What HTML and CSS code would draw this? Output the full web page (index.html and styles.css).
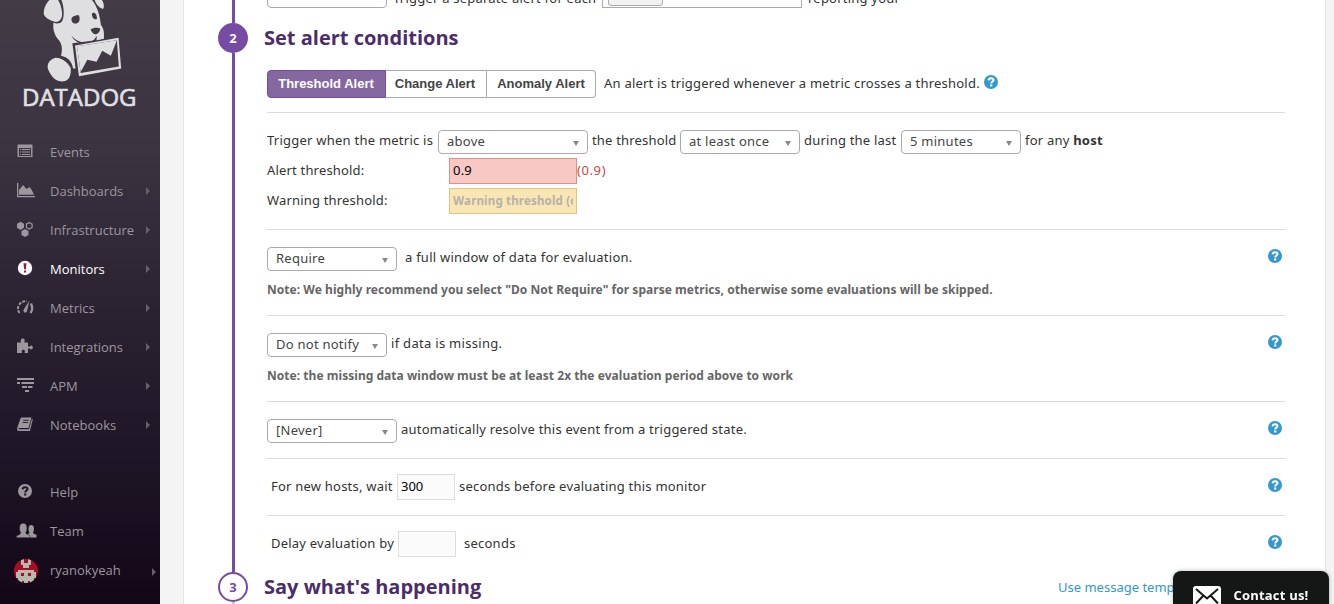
FILE: index.html
```html
<!DOCTYPE html>
<html lang="en">
<head>
<meta charset="utf-8">
<title>Monitors | Datadog</title>
<link rel="stylesheet" href="styles.css">
</head>
<body>
<svg class="sprite" width="0" height="0">
  <symbol id="help" viewBox="0 0 14 14">
    <circle cx="7" cy="7" r="7" fill="currentColor"/>
    <path class="mark" d="M4.600 5.400C4.700 3.900 5.700 3.200 7.100 3.200c1.500 0 2.400.8 2.400 1.900C9.500 6.600 7.200 6.600 7.200 8.600" fill="none" stroke-width="2"/>
    <rect class="dot" x="6.100" y="9.500" width="2.200" height="2"/>
  </symbol>
</svg>
<aside class="sidebar">
  <div class="brand">
    <svg class="dog" viewBox="0 0 480 250">
      <g fill="#dfdfe2">
        <path d="M148 0C136 12 130 28 131 43C135 54 150 62 166 66C178 67 187 57 186 40C185 22 180 10 174 0Z"/>
        <path d="M184 0C193 22 193 52 186 64C180 72 168 72 160 68C158 88 162 102 172 116C188 132 187 150 183 168C203 172 216 186 219 206L228 206L220 132L250 134L280 126L312 117C313 100 313 88 303 75C300 50 294 22 276 0Z"/>
        <path d="M284 0C289 14 297 23 309 27C314 21 312 9 306 0Z"/>
        <path d="M166 174C144 180 138 200 146 213C156 236 173 248 192 245C208 242 214 225 212 205C208 190 192 174 166 174Z"/>
      </g>
      <g fill="#413a45">
        <path d="M215 63C211 52 222 45 237 46C241 58 239 69 228 71C221 71 216 68 215 63Z"/>
        <path d="M276 40C284 35 291 42 291 57C285 61 275 56 276 40Z"/>
        <path d="M272 88C280 82 294 82 301 86C300 97 293 104 286 103C279 102 274 96 272 88Z"/>
        <path d="M214 107C226 122 246 131 266 128C277 126 287 118 289 108C292 115 290 121 287 124C262 143 226 132 214 107Z"/>
        <path d="M217 130L360 112L367 210L230 232Z"/>
        <path d="M168 172C187 170 208 184 212 206C204 189 190 178 168 172Z"/>
      </g>
      <path fill="#dfdfe2" d="M225 137L356 114L364 206L237 230Z"/>
      <path fill="#413a45" d="M231 139L351 121L357 200L242 220Z"/>
      <path fill="#dfdfe2" d="M231 139L351 121L333 168L307 153L290 186L262 180L242 217Z"/>
    </svg>
    <div class="wordmark">DATADOG</div>
  </div>
  <nav class="nav">
    <a class="item"><svg viewBox="0 0 20 16"><path d="M3 1.500h14q.5 0 .5.5v12h-15v-12q0-.5.5-.5zM4 5v8h12V5zM5 6h1.200v1H5zM7 6h8v1H7zM5 8.500h1.200v1H5zM7 8.500h8v1H7zM5 11h1.200v1H5zM7 11h8v1H7z" fill-rule="evenodd"/></svg>Events</a>
    <a class="item"><svg viewBox="0 0 20 16"><path d="M2 1h1.300v13H20v1.300H2zM4 12.800V8l4-5 3.500 4 3-2 2 2.500L19 12.800z"/></svg>Dashboards<i class="arrow"></i></a>
    <a class="item"><svg viewBox="0 0 20 16"><path d="M5.500.8L9 2.800v4L5.500 9 2 6.800v-4zM10 8l3.500 2v4L10 16l-3.500-2v-4z"/><path d="M14.200 1.500l2.900 1.700v3.200l-2.900 1.700-2.800-1.700V3.200z" fill="none" stroke="currentColor" stroke-width="1.200"/></svg>Infrastructure<i class="arrow"></i></a>
    <a class="item active"><svg viewBox="0 0 20 16"><circle cx="10" cy="8" r="7.200"/><path d="M8.600 3.300h2.800L11 9.300H9z" fill="#941c34"/><rect x="9" y="10.500" width="2" height="2" fill="#941c34"/></svg>Monitors<i class="arrow"></i></a>
    <a class="item"><svg viewBox="0 0 20 16"><path d="M4.500 14Q2 10.500 3.500 7Q6 1.800 12 2.300" fill="none" stroke="currentColor" stroke-width="2" stroke-dasharray="3 1.300"/><path d="M16 4.500Q18.500 10 15.500 14" fill="none" stroke="currentColor" stroke-width="2.300"/><path d="M14.500 1.500L12 12.300Q10.600 14.500 9 13.200Q7.800 12 8.900 10.300z"/></svg>Metrics<i class="arrow"></i></a>
    <a class="item"><svg viewBox="0 0 20 16"><path d="M2 4.500h4.300Q5.300 3.500 5.800 2Q6.500.3 8.300.6Q10.600 1.600 9.200 4.500H13v4h2Q16 7 17.300 8Q18.600 9.500 17.300 11Q16 12 15 10.500H13v4.500H9.500q1.200-3-1.200-3.500-2.300.5-1.300 3.500H2z"/></svg>Integrations<i class="arrow"></i></a>
    <a class="item"><svg viewBox="0 0 20 16"><path d="M2 1h17v2H2zM2 5h3v2H2zM6.500 5H19v2H6.500zM7 9h5v2H7zM13 9h4.500v2H13zM10 13h4v2h-4z"/></svg>APM<i class="arrow"></i></a>
    <a class="item"><svg viewBox="0 0 20 16"><path d="M7 1.500h9.500l-3 10.500H3.500Q3 13 4.200 13.200H14L17 2.800l.8.700L14.900 15H4Q1.500 14.500 2.200 12L5.500 2.500Q6 1.500 7 1.500z"/><path d="M8.200 4.300h5.500M7.600 6.500h5.500" stroke="#2a2131" stroke-width="1"/></svg>Notebooks<i class="arrow"></i></a>
  </nav>
  <nav class="nav account">
    <a class="item"><svg class="dark-mark" viewBox="0 0 20 16"><use href="#help" x="3" y="1" width="14" height="14"/></svg>Help</a>
    <a class="item"><svg viewBox="0 0 20 16"><path d="M11.500 14.500v-1.800l3-1.700q-1-2-1-4Q13.500 3 16.300 3 19 3 19 6.800q0 2.400-1 3.700.3 1.700 3.500 2.300v2.700H13z"/><path d="M1.500 15.700v-2q4-1.200 4.200-2.800Q4.500 9 4.500 6q0-4.800 3.700-4.800T12 6q0 3-1.300 4.700.2 1.600 4.200 2.800v2.200z" stroke="#1f1627" stroke-width=".5"/></svg>Team</a>
    <a class="item user"><svg class="avatar" viewBox="0 0 24 24"><clipPath id="round"><circle cx="12" cy="12" r="12"/></clipPath><g clip-path="url(#round)"><path fill="#a80d26" d="M0 0h24v24H0z"/><path fill="#b3bbae" d="M7 0h3v4h4V0h3v6h-2v3H9V6H7zM4 11h16v2h2v6h-2v5h-4v-2h-2v2h-4v-2H8v2H4v-5H2v-6h2z"/><path fill="#a80d26" d="M7 14h3v3H7zM14 14h3v3h-3z"/></g></svg>ryanokyeah<i class="arrow"></i></a>
  </nav>
</aside>
<main class="panel">
  <section class="step step-prev">
    <div class="rail"><div class="line"></div></div>
    <div class="clipped">
      <span class="select w120"></span>
      <span class="label trigger">Trigger a separate alert for each</span>
      <span class="tags"><span class="tag"></span></span>
      <span class="label">reporting your</span>
    </div>
  </section>
  <section class="step step-current">
    <div class="rail"><div class="num filled">2</div><div class="line"></div></div>
    <div class="body">
      <h2>Set alert conditions</h2>
      <div class="types">
        <div class="group"><button class="on">Threshold Alert</button><button>Change Alert</button><button>Anomaly Alert</button></div>
        <span class="label">An alert is triggered whenever a metric crosses a threshold.</span>
        <svg class="help"><use href="#help"/></svg>
      </div>
      <div class="block conditions">
        <div class="row">
          <span class="label c1">Trigger when the metric is</span><span class="select w150">above</span>
          <span class="label c2">the threshold</span><span class="select w120">at least once</span>
          <span class="label c3">during the last</span><span class="select w120">5 minutes</span>
          <span class="label">for any <b>host</b></span>
        </div>
        <div class="row field"><span class="label name">Alert threshold:</span><input class="alert" value="0.9"><span class="label value">(0.9)</span></div>
        <div class="row field"><span class="label name">Warning threshold:</span><input class="warning" placeholder="Warning threshold (optional)"></div>
      </div>
      <div class="block tall">
        <div class="row"><span class="select w130">Require</span><span class="label wide">a full window of data for evaluation.</span><svg class="help end"><use href="#help"/></svg></div>
        <p>Note: We highly recommend you select "Do Not Require" for sparse metrics, otherwise some evaluations will be skipped.</p>
      </div>
      <div class="block tall">
        <div class="row"><span class="select w120">Do not notify</span><span class="label missing">if data is missing.</span><svg class="help end"><use href="#help"/></svg></div>
        <p>Note: the missing data window must be at least 2x the evaluation period above to work</p>
      </div>
      <div class="block short">
        <div class="row"><span class="select w130">[Never]</span><span class="label">automatically resolve this event from a triggered state.</span><svg class="help end"><use href="#help"/></svg></div>
      </div>
      <div class="block short">
        <div class="row indent"><span class="label wait">For new hosts, wait</span><input class="num-input" value="300"><span class="label">seconds before evaluating this monitor</span><svg class="help end"><use href="#help"/></svg></div>
      </div>
      <div class="block short">
        <div class="row indent"><span class="label delay">Delay evaluation by</span><input class="num-input"><span class="label wide">seconds</span><svg class="help end"><use href="#help"/></svg></div>
      </div>
    </div>
  </section>
  <section class="step step-next">
    <div class="rail"><div class="num">3</div><div class="line grey"></div></div>
    <div class="body head">
      <h2>Say what's happening</h2>
      <a class="label link">Use message templates</a>
    </div>
  </section>
</main>
<div class="contact">
  <svg viewBox="0 0 28 21"><rect width="28" height="21" rx="3" fill="#fff"/><path d="M3 3l11 9.500L25 3M3 17.500l7.500-8M25 17.500l-7.500-8" fill="none" stroke="#151716" stroke-width="2"/></svg>
  <span>Contact us!</span>
</div>
</body>
</html>
```
FILE: styles.css
```css
* { box-sizing: border-box; }
body {
  margin: 0;
  height: 604px;
  overflow: hidden;
  display: flex;
  background: #f4f4f4;
  color: #333;
  font: 13px/20px "Noto Sans", sans-serif;
}
.sprite { position: absolute; }

.sidebar {
  width: 160px;
  height: 604px;
  flex: none;
  background: linear-gradient(#433c47, #3a3340 25%, #2b2332 50%, #1e1626 75%, #130617);
  font-family: "Open Sans", sans-serif;
  color: #9c979f;
}
.brand { height: 132px; }
.dog { display: block; width: 160px; height: 83px; }
.wordmark {
  padding-left: 22px;
  font-size: 24px;
  line-height: 27px;
  font-weight: 400;
  -webkit-text-stroke: .7px #dfdfe2;
  color: #dfdfe2;
}
.nav { display: flex; flex-direction: column; }
.account { margin-top: 28px; }
.item {
  display: flex;
  align-items: center;
  height: 39px;
  padding: 0 10px 0 15px;
}
.item svg { width: 20px; height: 16px; margin: -2px 15px 0 0; fill: currentColor; flex: none; overflow: visible; }
.item .avatar { width: 24px; height: 24px; margin: 2px 12px 0 -1px; }
.item.active { color: #fff; }
.item.user { padding-right: 4px; }
.arrow {
  margin-left: auto;
  border: solid transparent;
  border-width: 4px 0 4px 4px;
  border-left-color: #67606b;
}
.user .arrow { margin-top: 4px; }
.mark { stroke: var(--mark, #fff); }
.dot { fill: var(--mark, #fff); }
.dark-mark { --mark: #1f1627; }

.panel {
  width: 1143px;
  margin-left: 23px;
  padding-left: 34px;
  height: 604px;
  flex: none;
  background: #fff;
  border: solid #e6e6e6;
  border-width: 0 1px;
}
.step { display: flex; gap: 16px; }
.step-prev { height: 23px; }
.step-current { height: 549px; }
.step-next { height: 32px; }
.rail { width: 30px; display: flex; flex-direction: column; align-items: center; flex: none; }
.line { width: 3px; flex: 1; background: #774aa4; }
.line.grey { background: #ccc; }
.num {
  width: 30px;
  height: 30px;
  border: 2px solid #774aa4;
  border-radius: 50%;
  text-align: center;
  font: bold 13px/26px "Open Sans", sans-serif;
  color: #774aa4;
}
.num.filled { background: #774aa4; color: #fff; }
.body { width: 1021px; }
h2 {
  margin: 0;
  font: bold 20px/30px "Open Sans", sans-serif;
  color: #4b2d6c;
}
.label { letter-spacing: .22px; padding-bottom: 3px; white-space: nowrap; }
.select {
  display: flex;
  align-items: center;
  justify-content: space-between;
  height: 24px;
  flex: none;
  padding: 0 8px 2px;
  border: 1px solid #aaa;
  border-radius: 4px;
  color: #444;
  letter-spacing: .25px;
}
.select:not(:empty)::after {
  content: "";
  margin-top: 4px;
  border: solid transparent;
  border-width: 5px 3px 0;
  border-top-color: #888;
}
.w120 { width: 120px; }
.w130 { width: 130px; }
.w150 { width: 150px; }

.clipped { height: 8px; padding-left: 3px; display: flex; align-items: flex-end; }
.clipped .label { padding-bottom: 0; }
.clipped .trigger { width: 212px; margin: 0 0 0 6px; }
.tags { width: 200px; height: 28px; margin: 0 6px 0 -3px; padding: 0 5px 1px; border: 1px solid #aaa; flex: none; display: flex; align-items: flex-end; }
.tag { width: 55px; height: 20px; background: #f1f1f1; border: 1px solid #aaa; border-radius: 3px; }

.types { display: flex; align-items: center; height: 28px; margin: 17px 0 14px 3px; }
.group { display: flex; margin-right: 8px; }
button {
  height: 28px;
  width: 101px;
  padding: 0 2px 2px 0;
  border: 1px solid #aaa;
  border-left-width: 0;
  background: #fff;
  color: #444;
  font: bold 13px "Liberation Sans", sans-serif;
}
button.on { width: 119px; padding-right: 1px; border: 1px solid #774aa4; background: #85689f; color: #fff; border-radius: 4px 0 0 4px; }
button:last-child { width: 109px; padding-right: 0; border-radius: 0 4px 4px 0; }
.help { width: 14px; height: 14px; flex: none; color: #3398cd; }
.types .help { margin: -4px 0 0 4px; }
.help.end { margin: -6px 3.500px 0 auto; }

.block { margin-left: 3px; border-top: 1px solid #dcdcdc; padding-top: 17px; }
.conditions { height: 117px; }
.tall { height: 86px; }
.short { height: 57px; }
.row { display: flex; align-items: center; height: 24px; }
.row .label { margin-left: 4px; padding-bottom: 4px; }
.row .c1 { width: 171px; margin-left: 0; letter-spacing: .24px; }
.row .c2 { width: 88px; letter-spacing: .18px; }
.row .c3 { width: 97px; }
.row .wide { margin-left: 8px; letter-spacing: .24px; }
.row .missing { letter-spacing: .3px; }
.row.field { height: 26px; margin-top: 4px; }
.row.field .label { padding-bottom: 3px; }
.row .name { width: 182px; margin-left: 0; letter-spacing: .18px; }
.row .value { margin-left: 0; color: #d24343; letter-spacing: .6px; }
.row.indent { padding-left: 4px; margin-top: -1px; }
.indent .label { padding-bottom: 2px; }
.indent .help { margin-top: -4px; }
.indent .wait { width: 126px; margin-left: 0; }
.indent .delay { width: 127px; margin-left: 0; }
input {
  height: 26px;
  width: 128px;
  padding: 0 3px 2px;
  border: 1px solid #ddd;
  border-radius: 0;
  background: #fbfbfb;
  color: #000;
  font: 13px "Noto Sans", sans-serif;
  flex: none;
}
.num-input { width: 58px; }
.alert { background: #f8c8c5; border-color: #df8e89; letter-spacing: .2px; }
.warning { background: #fae6b5; border-color: #dfc67c; }
.warning::placeholder { color: #b5b2a8; opacity: 1; font: bold 11.5px "Noto Sans", sans-serif; letter-spacing: .18px; }
p { margin: 9px 0 0; font-size: 12px; line-height: 20px; font-weight: bold; color: #666; letter-spacing: .036px; }

.head { display: flex; height: 30px; }
.link { margin-left: auto; width: 227px; line-height: 30px; color: #3398cd; letter-spacing: 0; }
.contact {
  position: fixed;
  right: 5px;
  bottom: 0;
  width: 156px;
  height: 33px;
  overflow: hidden;
  display: flex;
  padding: 15px 0 0 20px;
  border-radius: 8px 8px 0 0;
  background: #151716;
  color: #fff;
  font: bold 13px/18px "Open Sans", sans-serif;
  letter-spacing: .2px;
  box-shadow: 0 0 4px rgba(0, 0, 0, .3);
}
.contact svg { width: 28px; height: 21px; margin-right: 12.500px; }
```
